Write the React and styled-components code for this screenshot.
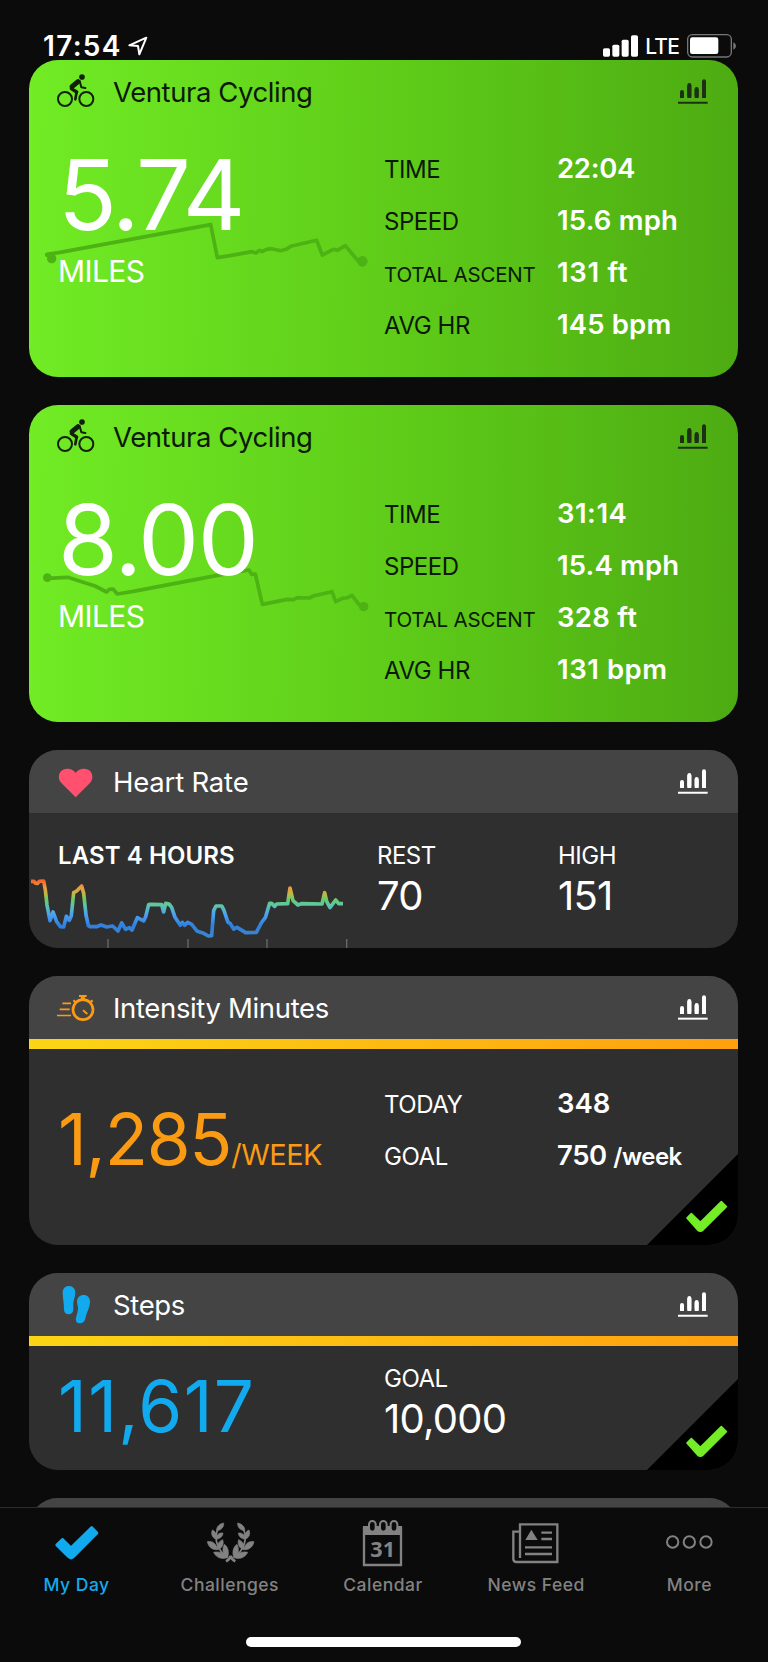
import React from "react";
import styled, { createGlobalStyle } from "styled-components";

const GlobalStyle = createGlobalStyle`
  * { box-sizing: border-box; }
  body { margin: 0; background: #0b0b0b; }
`;

const Screen = styled.div`
  width: 768px;
  height: 1662px;
  display: flex;
  flex-direction: column;
  overflow: hidden;
  background: #0b0b0b;
  color: #fff;
  font-family: Inter, "Liberation Sans", sans-serif;
  white-space: nowrap;
`;

const StatusBar = styled.header`
  height: 60px;
  flex: none;
  display: flex;
  align-items: flex-start;
  justify-content: space-between;
  padding: 33px 32px 0 43px;
`;

const StatusGroup = styled.div`
  height: 26px;
  display: flex;
  align-items: center;
`;

const Clock = styled.span`
  font-size: 28px;
  font-weight: 600;
  line-height: 26px;
  letter-spacing: 1.3px;
  margin-right: 6px;
`;

const Carrier = styled.span`
  font-size: 21px;
  font-weight: 500;
  line-height: 26px;
  letter-spacing: -0.8px;
  margin: 1px 8px 0 6px;
`;

const Feed = styled.main`
  flex: 1;
  min-height: 0;
  overflow: hidden;
  display: flex;
  flex-direction: column;
  gap: 28px;
  padding: 0 30px 0 29px;
`;

const Card = styled.section`
  position: relative;
  flex: none;
  height: ${(p) => p.$height}px;
  border-radius: 29px;
  overflow: hidden;
  background: ${(p) => (p.$green ? "linear-gradient(91deg, #71ec25 0%, #5fcd19 50%, #4dab12 100%)" : "#2f2f2f")};
  color: ${(p) => (p.$green ? "#0c1a05" : "#fff")};
`;

const CardHeader = styled.div`
  height: 63px;
  display: flex;
  align-items: center;
  padding: 0 30px 0 27px;
  background: ${(p) => (p.$plain ? "transparent" : "#444")};
`;

const CardTitle = styled.h2`
  flex: 1;
  margin: 0 0 0 18px;
  font-size: 27.5px;
  font-weight: 400;
  line-height: 36px;
  letter-spacing: ${(p) => p.$ls || -0.35}px;
`;

const GoalBar = styled.div`
  height: 10px;
  background: linear-gradient(90deg, #fbd615, #ffa00f);
`;

const CardBody = styled.div`
  display: flex;
  align-items: flex-start;
`;

const Primary = styled.div`
  position: relative;
  width: ${(p) => p.$width || 355}px;
  padding: ${(p) => p.$top}px 0 0 29px;
`;

const Distance = styled.div`
  color: #fff;
  font-size: 97px;
  line-height: 98px;
  letter-spacing: ${(p) => p.$ls}px;
`;

const DistanceUnit = styled.div`
  color: #fff;
  margin-top: 8.5px;
  font-size: 30px;
  line-height: 36px;
  letter-spacing: -0.6px;
`;

const Total = styled.div`
  color: ${(p) => p.$color};
  font-size: 71px;
  line-height: 72px;
  letter-spacing: ${(p) => p.$ls || 0}px;
`;

const TotalUnit = styled.span`
  font-size: 29px;
  letter-spacing: -0.5px;
`;

const Metrics = styled.div`
  flex: 1;
  padding-top: ${(p) => p.$top}px;
`;

const MetricRow = styled.div`
  height: 52px;
  display: flex;
  align-items: baseline;
`;

const MetricLabel = styled.span`
  width: 173px;
  font-size: ${(p) => (p.$small ? 20.5 : 24)}px;
  line-height: 26px;
  letter-spacing: ${(p) => (p.$small ? -0.2 : -0.45)}px;
`;

const MetricValue = styled.span`
  color: #fff;
  font-size: 27.5px;
  font-weight: 600;
  line-height: 52px;
  letter-spacing: ${(p) => p.$ls || 0}px;
`;

const MetricUnit = styled.span`
  font-size: 24px;
  letter-spacing: -0.5px;
`;

const Stat = styled.div`
  width: ${(p) => p.$width}px;
  padding-top: ${(p) => p.$top}px;
`;

const StatLabel = styled.div`
  font-size: 24px;
  font-weight: ${(p) => (p.$strong ? 600 : 400)};
  line-height: 30px;
  letter-spacing: ${(p) => (p.$strong ? 0.1 : -0.5)}px;
`;

const StatValue = styled.div`
  margin-top: 5px;
  font-size: 40px;
  line-height: 40px;
  letter-spacing: -0.75px;
`;

const Overlay = styled.svg`
  position: absolute;
  left: 0;
  top: 0;
  display: block;
`;

const CornerBadge = styled.svg`
  position: absolute;
  right: 0;
  bottom: 0;
  display: block;
`;

const Foreground = styled.div`
  position: relative;
`;

const TabBar = styled.nav`
  height: 155px;
  flex: none;
  display: flex;
  flex-direction: column;
  align-items: center;
  border-top: 1px solid #2c2c2c;
  background: #0b0b0b;
`;

const Tabs = styled.div`
  width: 100%;
  display: flex;
  padding: 9px 2px 0 0;
  height: 129px;
`;

const Tab = styled.div`
  flex: 1 1 0;
  display: flex;
  flex-direction: column;
  align-items: center;
  color: ${(p) => (p.$active ? "#12aaee" : "#828282")};
`;

const TabLabel = styled.span`
  margin-top: 4px;
  font-size: 17.5px;
  font-weight: 500;
  line-height: 24px;
  letter-spacing: 0.5px;
`;

const HomeIndicator = styled.div`
  width: 275px;
  height: 10px;
  margin-right: 1px;
  border-radius: 5px;
  background: #fff;
`;

function CardIcon({ children }) {
  return (
    <svg width="39" height="63" viewBox="168 30 117 189" fill="none">
      {children}
    </svg>
  );
}

function CyclistIcon() {
  return (
    <CardIcon>
      <g stroke="#12200a" strokeLinecap="round" strokeLinejoin="round">
        <circle cx="195" cy="147" r="21" strokeWidth="6" />
        <circle cx="259" cy="147" r="21" strokeWidth="6" />
        <path d="M216 110 L234 95" strokeWidth="15" />
        <path d="M239 93 L244 112 L256 114" strokeWidth="6" />
        <path d="M214 116 L230 126" strokeWidth="10" />
        <path d="M230 126 L226 148" strokeWidth="8" />
      </g>
      <circle cx="246" cy="81" r="8.5" fill="#12200a" />
    </CardIcon>
  );
}

function HeartIcon() {
  return (
    <CardIcon>
      <path
        d="M227 172 L184 129 C170 114 176 86 202 86 C215 86 223 93 227 99 C231 93 239 86 252 86 C278 86 284 114 270 129 Z"
        fill="#ff506f"
      />
    </CardIcon>
  );
}

function StopwatchIcon() {
  return (
    <CardIcon>
      <g transform="translate(0 -3)" stroke="#fb9b14" strokeWidth="5">
        <circle cx="249" cy="134" r="30" strokeWidth="8" />
        <path d="M237 93 H260" strokeWidth="6" />
        <path d="M248.5 94 V104" strokeWidth="12" />
        <path d="M220 106 L228 112 M278 106 L270 112" strokeWidth="7" />
        <path d="M249 136 L262 147" strokeWidth="6" />
        <path d="M187 115 H213 M179 133 H209 M171 151.500 H213" />
      </g>
    </CardIcon>
  );
}

function FootstepsIcon() {
  return (
    <CardIcon>
      <g transform="translate(0 -9)" fill="#12aaee">
        <path d="M188 98 C188 85 196 78 207 78 C219 78 226 87 226 98 C226 110 220 120 220 130 L220 148 C220 158 214 163 206 163 C197 163 192 158 192 148 C192 128 188 112 188 98Z" />
        <path d="M231 126 C231 112 240 105 251 105 C262 105 270 113 270 126 C270 140 260 158 257 172 C255 184 249 190 240 190 C231 190 226 184 228 174 C230 162 234 156 234 146 C234 138 231 134 231 126Z" />
      </g>
    </CardIcon>
  );
}

function ChartIcon({ dark }) {
  return (
    <svg width="30" height="25" viewBox="883 237 90 75" fill="none" stroke={dark ? "#1d2f14" : "#fff"}>
      <path d="M895 294 V277 M917 294 V256 M939 294 V268 M961 294 V245" strokeWidth="12" />
      <path d="M895 287 V276 M917 287 V255 M939 287 V267 M961 287 V244" strokeWidth="12" strokeLinecap="round" />
      <path d="M883 308 H972" strokeWidth="6" />
    </svg>
  );
}

function GoalBadge() {
  return (
    <CornerBadge width="91" height="91" viewBox="789 567 273 273">
      <path d="M1062 567 V840 H789 Z" fill="#000" />
      <path
        d="M909 759 L922 746 L949 772 L1012 710 L1027 725 L957 795 Q949 802 941 795 Z"
        fill="#74ec27"
        stroke="#74ec27"
        strokeWidth="5"
        strokeLinejoin="round"
      />
    </CornerBadge>
  );
}

const ELEVATION = {
  first: {
    line: "M141 763 L180 757 L632 674 L652 773 L690 767 L756 755 L768 759 L778 751 L786 755 L800 748 L815 746 L842 752 L858 748 L872 739 L950 721 L967 765 L1000 748 L1012 751 L1036 737 L1072 780 L1087 783",
    dots: [[155, 776, 14], [142, 765, 7], [1087, 784, 16]],
    top: 180,
  },
  second: {
    line: "M142 550 L203 547 L285 573 L320 591 L328 583 L339 582 L352 597 L400 589 L668 538 L747 525 L755 538 L766 537 L787 628 L862 613 L880 614 L892 608 L928 609 L942 602 L996 590 L1007 620 L1030 609 L1040 609 L1056 601 L1078 630 L1091 635",
    dots: [[142, 548, 13], [1091, 635, 14]],
    top: 30,
  },
};

function ElevationLine({ track }) {
  return (
    <Overlay width="355" height="317" viewBox={`87 ${track.top} 1065 951`} fill="none">
      <path d={track.line} stroke="#4db213" strokeWidth="11" strokeLinejoin="round" strokeLinecap="round" />
      {track.dots.map(([x, y, r]) => (
        <circle key={x} cx={x} cy={y} r={r} fill="#4db213" />
      ))}
    </Overlay>
  );
}

function HeartRateLine() {
  return (
    <Overlay width="355" height="198" viewBox="87 30 1065 594" fill="none">
      <defs>
        <linearGradient id="bpm" gradientUnits="userSpaceOnUse" x1="0" y1="422" x2="0" y2="590">
          <stop offset="0" stopColor="#f0672f" />
          <stop offset="0.12" stopColor="#f09a3c" />
          <stop offset="0.25" stopColor="#b5bc4c" />
          <stop offset="0.34" stopColor="#62cd6c" />
          <stop offset="0.44" stopColor="#5fc5a8" />
          <stop offset="0.6" stopColor="#4ba2f2" />
          <stop offset="0.8" stopColor="#2f80de" />
          <stop offset="1" stopColor="#3d84cc" />
        </linearGradient>
      </defs>
      <path d="M324 597 V625 M564 597 V625 M801 597 V625 M1040 597 V625" stroke="#6a6a6a" strokeWidth="4" />
      <path
        d="M93 424 L102 424 L106 429 L112 430 L118 424 L131 423 L136 450 L141 495 L150 542 L159 516 L170 545 L181 560 L191 561 L199 529 L208 541 L214 527 L221 458 L230 453 L245 438 L251 460 L258 525 L265 557 L270 560 L290 560 L303 555 L320 561 L338 558 L354 573 L365 549 L377 568 L388 563 L396 570 L412 533 L431 543 L437 530 L446 494 L452 493 L485 494 L491 516 L497 490 L507 492 L515 502 L525 532 L541 556 L547 547 L554 556 L563 547 L575 553 L592 574 L611 580 L625 588 L635 587 L641 512 L648 498 L665 498 L671 509 L684 547 L690 550 L701 567 L711 562 L737 578 L769 577 L785 547 L796 533 L809 490 L815 490 L824 499 L830 492 L863 491 L870 444 L879 482 L894 495 L904 491 L966 492 L974 458 L980 484 L990 503 L1007 480 L1016 491 L1029 491"
        stroke="url(#bpm)"
        strokeWidth="11"
        strokeLinejoin="round"
      />
    </Overlay>
  );
}

function TabIcon({ x, children }) {
  return (
    <svg width="52" height="52" viewBox={`${x} 81 156 156`} fill="none">
      {children}
    </svg>
  );
}

function MyDayIcon() {
  return (
    <TabIcon x={152}>
      <path
        d="M169 165 L186 148 L212 173 L274 112 L290 129 L220 200 Q212 208 204 200 Z"
        fill="#12aaee"
        stroke="#12aaee"
        strokeWidth="8"
        strokeLinejoin="round"
      />
    </TabIcon>
  );
}

function LaurelBranch() {
  return (
    <>
      <path d="M652 121 C644 145 648 178 682 202" stroke="currentColor" strokeWidth="5" />
      <g fill="currentColor" stroke="currentColor" strokeWidth="2" strokeLinejoin="round">
        <path d="M671 99 C672 111 664 121 650 122 C648 112 658 101 671 99Z" />
        <path d="M637 120 C647 124 651 134 647 147 C637 143 632 132 637 120Z" />
        <path d="M669 129 C668 141 658 148 647 147 C648 136 656 128 669 129Z" />
        <path d="M622 155 C637 152 650 161 652 179 C636 180 625 170 622 155Z" />
        <path d="M668 149 C673 162 666 175 653 179 C648 166 656 154 668 149Z" />
        <path d="M641 187 C655 183 672 189 683 202 C668 210 649 204 641 187Z" />
        <path d="M673 163 C686 172 688 190 682 204 C669 198 665 178 673 163Z" />
      </g>
      <path d="M692 197 Q690 208 678 214" stroke="currentColor" strokeWidth="8" />
    </>
  );
}

function LaurelIcon() {
  return (
    <TabIcon x={612}>
      <LaurelBranch />
      <g transform="translate(1384 0) scale(-1 1)">
        <LaurelBranch />
      </g>
    </TabIcon>
  );
}

const CalendarDay = styled.text`
  font-family: "Noto Sans", sans-serif;
  font-size: 65px;
  font-weight: 700;
  text-anchor: middle;
`;

function CalendarIcon() {
  return (
    <TabIcon x={1071}>
      <path d="M1092 110 V225 H1203 V110" stroke="currentColor" strokeWidth="7" />
      <path d="M1089 108 H1206 V135 H1089 Z" fill="currentColor" />
      {[1117, 1150, 1182].map((x) => (
        <rect key={x} x={x - 10} y="93" width="20" height="32" rx="10" fill="#0b0b0b" stroke="currentColor" strokeWidth="6" />
      ))}
      <CalendarDay x="1148" y="202" fill="currentColor">31</CalendarDay>
    </TabIcon>
  );
}

function NewsIcon() {
  return (
    <TabIcon x={379}>
      <g stroke="currentColor" strokeWidth="7">
        <path d="M409 204 V103 H521 V216 H398 Q389 216 389 207 V125 H409" />
        <path d="M473 128 H505 M473 147 H505 M424 172 H505 M424 192 H505" />
      </g>
      <path d="M443 119 L462 150 H425 Z" fill="currentColor" />
    </TabIcon>
  );
}

function MoreIcon() {
  return (
    <TabIcon x={838}>
      <g stroke="currentColor" strokeWidth="6">
        <circle cx="867" cy="156" r="17" />
        <circle cx="917" cy="156" r="17" />
        <circle cx="967" cy="156" r="17" />
      </g>
    </TabIcon>
  );
}

function ActivityCard({ distance, ls, metrics, track }) {
  return (
    <Card $height={317} $green>
      <ElevationLine track={track} />
      <Foreground>
        <CardHeader $plain>
          <CyclistIcon />
          <CardTitle $ls={-0.42}>Ventura Cycling</CardTitle>
          <ChartIcon dark />
        </CardHeader>
        <CardBody>
          <Primary $top={23}>
            <Distance $ls={ls}>{distance}</Distance>
            <DistanceUnit>MILES</DistanceUnit>
          </Primary>
          <Metrics $top={19}>
            {metrics.map(([label, value, spacing]) => (
              <MetricRow key={label}>
                <MetricLabel $small={label.length > 8}>{label}</MetricLabel>
                <MetricValue $ls={spacing}>{value}</MetricValue>
              </MetricRow>
            ))}
          </Metrics>
        </CardBody>
      </Foreground>
    </Card>
  );
}

export default function App() {
  return (
    <>
      <GlobalStyle />
      <Screen>
        <StatusBar>
          <StatusGroup>
            <Clock>17:54</Clock>
            <svg width="20" height="20" viewBox="383 107 60 60" fill="none">
              <path d="M387 135 L438 112 L417 162 L413 137 Z" stroke="#fff" strokeWidth="6" strokeLinejoin="round" />
            </svg>
          </StatusGroup>
          <StatusGroup>
            <svg width="36" height="22" viewBox="663 103 108 66" fill="#fff">
              <rect x="663" y="143" width="21" height="25" rx="5" />
              <rect x="691" y="132" width="21" height="36" rx="5" />
              <rect x="719" y="117" width="21" height="51" rx="5" />
              <rect x="747" y="104" width="21" height="64" rx="5" />
            </svg>
            <Carrier>LTE</Carrier>
            <svg width="49" height="24" viewBox="909 101 147 72" fill="none">
              <rect x="911" y="103" width="131" height="67" rx="14" stroke="#777" strokeWidth="4" />
              <path d="M1048 126 Q1056 129 1056 137 Q1056 145 1048 148 Z" fill="#777" />
              <rect x="918" y="111" width="85" height="50" rx="7" fill="#fff" />
            </svg>
          </StatusGroup>
        </StatusBar>

        <Feed>
          <ActivityCard
            distance="5.74"
            ls={-2.5}
            track={ELEVATION.first}
            metrics={[
              ["TIME", "22:04", -0.3],
              ["SPEED", "15.6 mph", 0.2],
              ["TOTAL ASCENT", "131 ft", 0.7],
              ["AVG HR", "145 bpm", 0.15],
            ]}
          />
          <ActivityCard
            distance="8.00"
            ls={-1.6}
            track={ELEVATION.second}
            metrics={[
              ["TIME", "31:14", 0.5],
              ["SPEED", "15.4 mph", 0.15],
              ["TOTAL ASCENT", "328 ft", 0.3],
              ["AVG HR", "131 bpm", 0.55],
            ]}
          />

          <Card $height={198}>
            <CardHeader>
              <HeartIcon />
              <CardTitle $ls={-0.2}>Heart Rate</CardTitle>
              <ChartIcon />
            </CardHeader>
            <HeartRateLine />
            <CardBody>
              <Primary $width={348} $top={28}>
                <StatLabel $strong>LAST 4 HOURS</StatLabel>
              </Primary>
              <Stat $width={181} $top={28}>
                <StatLabel>REST</StatLabel>
                <StatValue>70</StatValue>
              </Stat>
              <Stat $width={150} $top={28}>
                <StatLabel>HIGH</StatLabel>
                <StatValue>151</StatValue>
              </Stat>
            </CardBody>
          </Card>

          <Card $height={269}>
            <CardHeader>
              <StopwatchIcon />
              <CardTitle>Intensity Minutes</CardTitle>
              <ChartIcon />
            </CardHeader>
            <GoalBar />
            <CardBody>
              <Primary $top={54}>
                <Total $color="#fb9b14" $ls={-1.3}>1,285<TotalUnit>/WEEK</TotalUnit></Total>
              </Primary>
              <Metrics $top={28}>
                <MetricRow>
                  <MetricLabel>TODAY</MetricLabel>
                  <MetricValue>348</MetricValue>
                </MetricRow>
                <MetricRow>
                  <MetricLabel>GOAL</MetricLabel>
                  <MetricValue $ls={-0.4}>750 <MetricUnit>/week</MetricUnit></MetricValue>
                </MetricRow>
              </Metrics>
            </CardBody>
            <GoalBadge />
          </Card>

          <Card $height={196.5}>
            <CardHeader>
              <FootstepsIcon />
              <CardTitle>Steps</CardTitle>
              <ChartIcon />
            </CardHeader>
            <GoalBar />
            <CardBody>
              <Primary $top={24}>
                <Total $color="#12aaee" $ls={1.3}>11,617</Total>
              </Primary>
              <Stat $width={200} $top={18}>
                <StatLabel>GOAL</StatLabel>
                <StatValue>10,000</StatValue>
              </Stat>
            </CardBody>
            <GoalBadge />
          </Card>

          <Card $height={120}>
            <CardHeader />
          </Card>
        </Feed>

        <TabBar>
          <Tabs>
            <Tab $active><MyDayIcon /><TabLabel>My Day</TabLabel></Tab>
            <Tab><LaurelIcon /><TabLabel>Challenges</TabLabel></Tab>
            <Tab><CalendarIcon /><TabLabel>Calendar</TabLabel></Tab>
            <Tab><NewsIcon /><TabLabel>News Feed</TabLabel></Tab>
            <Tab><MoreIcon /><TabLabel>More</TabLabel></Tab>
          </Tabs>
          <HomeIndicator />
        </TabBar>
      </Screen>
    </>
  );
}
